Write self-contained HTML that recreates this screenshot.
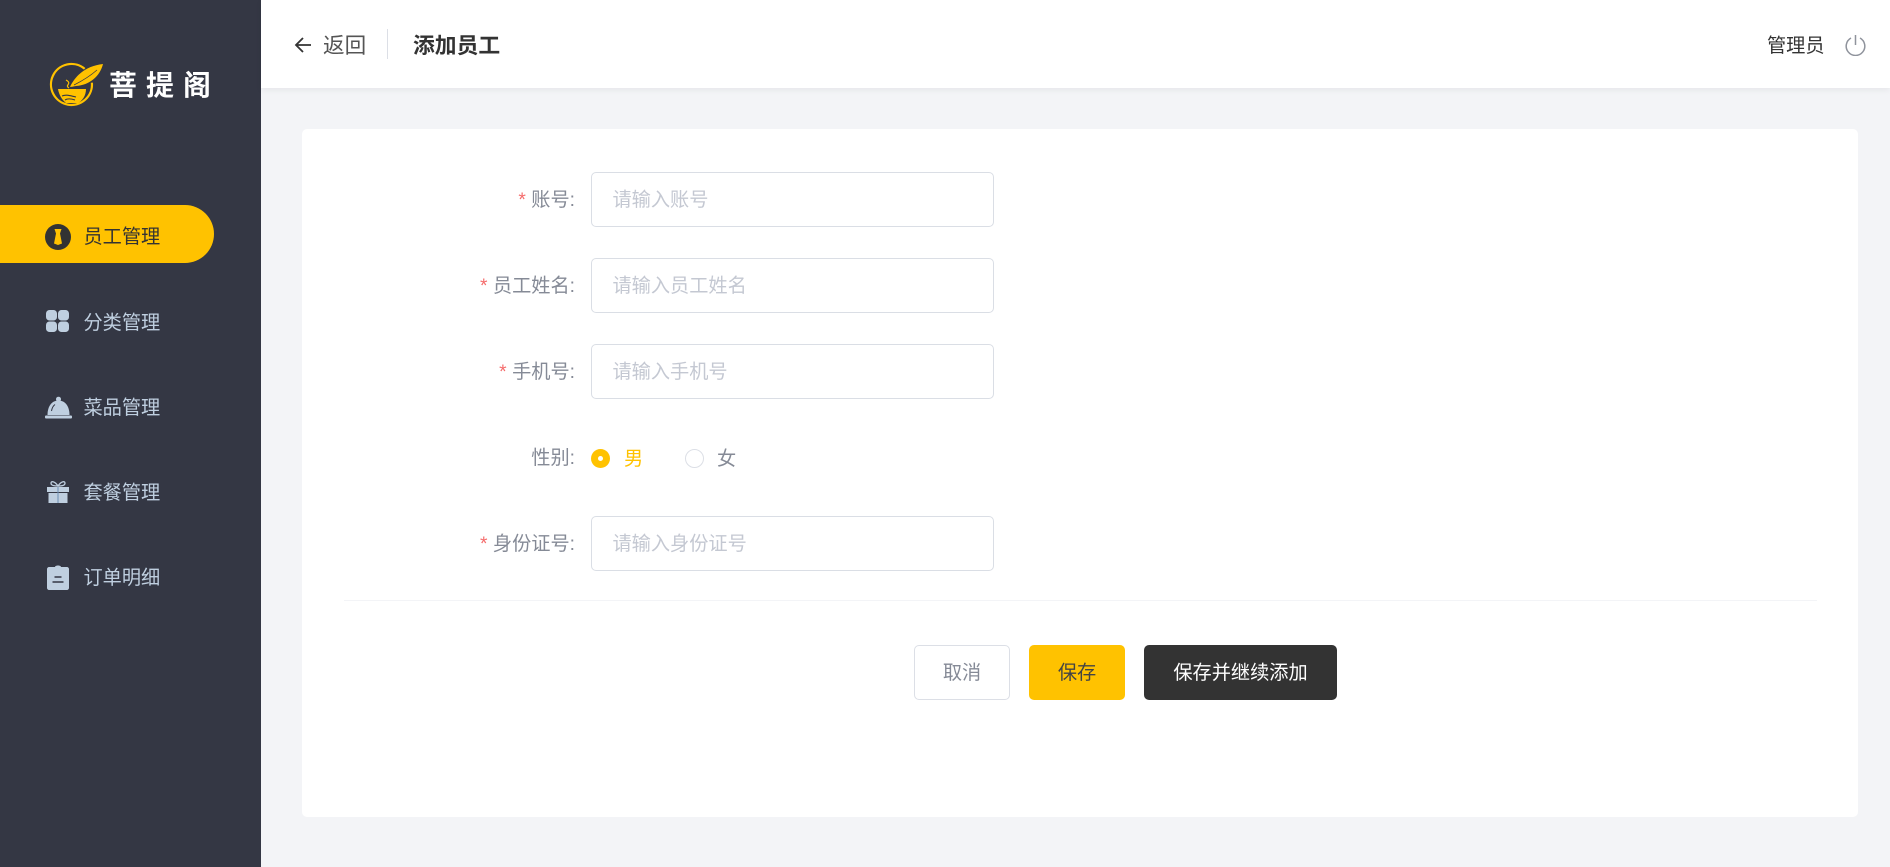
<!DOCTYPE html>
<html lang="zh-CN"><head><meta charset="utf-8"><title>添加员工</title>
<style>
*{box-sizing:border-box;margin:0;padding:0}
html,body{width:1890px;height:867px;overflow:hidden;background:#f3f4f7;font-family:"Liberation Sans","WenQuanYi Zen Hei","Noto Sans CJK SC",sans-serif;font-size:19.2px}
.a{position:absolute;white-space:nowrap}
#side{left:0;top:0;width:261px;height:867px;background:#343744}
#head{left:261px;top:0;width:1629px;height:88px;background:#fff;box-shadow:0 2px 6px rgba(0,0,0,.06)}
#card{left:302px;top:129px;width:1556px;height:688px;background:#fff;border-radius:5px}
.m{left:83.500px;width:90px;height:30px;line-height:30px;color:#bfcfe0}
.l{right:1315px;height:30px;line-height:30px;color:#858a96;text-align:right}
.l i{font-style:normal;color:#f56c6c;margin-right:5.500px}
.in{left:591px;width:403px;height:55px;border:1px solid #dadee5;border-radius:5px;line-height:55px;padding-left:21px;color:#c4c8d2;background:#fff;text-indent:-.500px}
.b{top:645px;height:55px;line-height:55px;text-align:center;border-radius:5px;border:1px solid}
</style></head><body>
<div class="a" id="side"></div>
<div class="a" id="head"></div>
<div class="a" id="card"></div>

<svg class="a" style="left:45px;top:58px" width="64" height="52" viewBox="45 58 64 52">
<path d="M84.700 68.800A20.500 20.500 0 1 0 91.900 82.700" fill="none" stroke="#ffc200" stroke-width="2.200"/>
<path d="M70 87C74 78 84 66 103 64C100 76 90 85 76 86C73 86.500 71 87 70 87Z" fill="#ffc200"/>
<path d="M74 85C82 81 89 77 97 70" stroke="#343744" stroke-width=".7" fill="none"/>
<path d="M58 89H86C86 96 82 101 78 103H66C62 100 59 95 58 89Z" fill="#ffc200"/>
<path d="M62 96C66 94 71 96 76 97M65 100C68 98 72 99 75 100" stroke="#343744" stroke-width="1.100" fill="none"/>
<path d="M69 88C64 85 73 84 66 80" stroke="#ffc200" stroke-width="1.200" fill="none"/>
</svg>
<div class="a" style="left:109px;top:65px;height:38px;line-height:38px;font-size:28px;font-weight:700;letter-spacing:9px;color:#fff;font-family:'Noto Sans CJK SC',sans-serif">菩提阁</div>

<div class="a" style="left:0;top:205px;width:214px;height:58px;background:#ffc200;border-radius:0 29px 29px 0"></div>
<svg class="a" style="left:45px;top:224px" width="26" height="26" viewBox="0 0 26 26"><circle cx="13" cy="13" r="13" fill="#333"/><path d="M9.500 5H16.500L15 9.500L17 19.500L13 21L9 19.500L11 9.500Z" fill="#ffc200"/></svg>
<div class="a m" style="top:223px;color:#333">员工管理</div>

<svg class="a" style="left:46px;top:310px" width="23" height="22" viewBox="0 0 23 22" fill="#bfcfe0"><rect width="11" height="10.500" rx="3.500"/><rect x="12" width="11" height="10.500" rx="3.500"/><rect y="11.500" width="11" height="10.500" rx="3.500"/><rect x="12" y="11.500" width="11" height="10.500" rx="3.500"/></svg>
<div class="a m" style="top:309px">分类管理</div>

<svg class="a" style="left:45px;top:396px" width="27" height="23" viewBox="0 0 27 23" fill="#bfcfe0"><circle cx="13.500" cy="3.200" r="2.500"/><path d="M2.500 19C2.500 10 7 4.500 13.500 4.500S24.500 10 24.500 19Z"/><rect y="19.500" width="27" height="3" rx="1"/><path d="M6.500 15C7 12 8 10 10 8.500" stroke="#343744" fill="none"/></svg>
<div class="a m" style="top:394px">菜品管理</div>

<svg class="a" style="left:47px;top:480px" width="23" height="24" viewBox="0 0 23 24" fill="#bfcfe0"><rect y="7" width="22" height="5"/><rect x="1.500" y="13" width="19" height="10"/><rect x="10.500" y="7" width="1" height="16" fill="#6c8fb5"/><path d="M11 6C8 1.500 4 0.500 4 3.200C4 5.500 8 6 11 6C14 6 18 5.500 18 3.200C18 0.500 14 1.500 11 6Z" fill="none" stroke="#bfcfe0" stroke-width="1.300"/></svg>
<div class="a m" style="top:479px">套餐管理</div>

<svg class="a" style="left:47px;top:565px" width="23" height="25" viewBox="0 0 23 25"><path d="M2 2H8C8 0 14 0 14 2H20C21 2 22 3 22 4V23C22 24 21 25 20 25H2C1 25 0 24 0 23V4C0 3 1 2 2 2Z" fill="#bfcfe0"/><path d="M7.500 12H14.500M5.500 17H16.500" stroke="#343744" stroke-width="1.500"/></svg>
<div class="a m" style="top:564px">订单明细</div>

<svg class="a" style="left:294px;top:36px" width="18" height="18" viewBox="0 0 18 18" fill="none" stroke="#333" stroke-width="1.800"><path d="M17 9H2M9 2L2 9L9 16"/></svg>
<div class="a" style="left:323px;top:31px;height:30px;line-height:30px;font-size:21.600px;color:#555">返回</div>
<div class="a" style="left:387px;top:29px;width:1px;height:30px;background:#dcdfe6"></div>
<div class="a" style="left:413px;top:30px;height:30px;line-height:30px;font-size:21.800px;font-weight:700;color:#333;font-family:'Noto Sans CJK SC',sans-serif">添加员工</div>
<div class="a" style="left:1767px;top:32px;height:30px;line-height:30px;color:#333">管理员</div>
<svg class="a" style="left:1845px;top:34px" width="21" height="22" viewBox="0 0 21 22" fill="none" stroke="#8f939c" stroke-width="1.500"><path d="M6 4A9.300 9.300 0 1 0 15 4M10.500 1V11"/></svg>

<div class="a l" style="top:186px"><i>*</i>账号:</div>
<div class="a in" style="top:172px">请输入账号</div>
<div class="a l" style="top:272px"><i>*</i>员工姓名:</div>
<div class="a in" style="top:258px">请输入员工姓名</div>
<div class="a l" style="top:358px"><i>*</i>手机号:</div>
<div class="a in" style="top:344px">请输入手机号</div>
<div class="a l" style="top:444px">性别:</div>
<div class="a" style="left:591px;top:449px;width:19px;height:19px;border-radius:50%;background:#ffc200"></div>
<div class="a" style="left:598px;top:456px;width:5px;height:5px;border-radius:50%;background:#fff"></div>
<div class="a" style="left:624px;top:445px;height:30px;line-height:30px;color:#ffc200">男</div>
<div class="a" style="left:685px;top:449px;width:19px;height:19px;border-radius:50%;border:1px solid #dcdfe6;background:#fff"></div>
<div class="a" style="left:717px;top:445px;height:30px;line-height:30px;color:#858a96">女</div>
<div class="a l" style="top:530px"><i>*</i>身份证号:</div>
<div class="a in" style="top:516px">请输入身份证号</div>
<div class="a" style="left:344px;top:600px;width:1473px;height:1px;background:#f3f4f7"></div>

<div class="a b" style="left:914px;width:96px;border-color:#dcdfe6;color:#858a96;background:#fff">取消</div>
<div class="a b" style="left:1029px;width:96px;border-color:#ffc200;color:#444;background:#ffc200">保存</div>
<div class="a b" style="left:1144px;width:193px;border-color:#333;color:#fff;background:#333">保存并继续添加</div>
</body></html>
